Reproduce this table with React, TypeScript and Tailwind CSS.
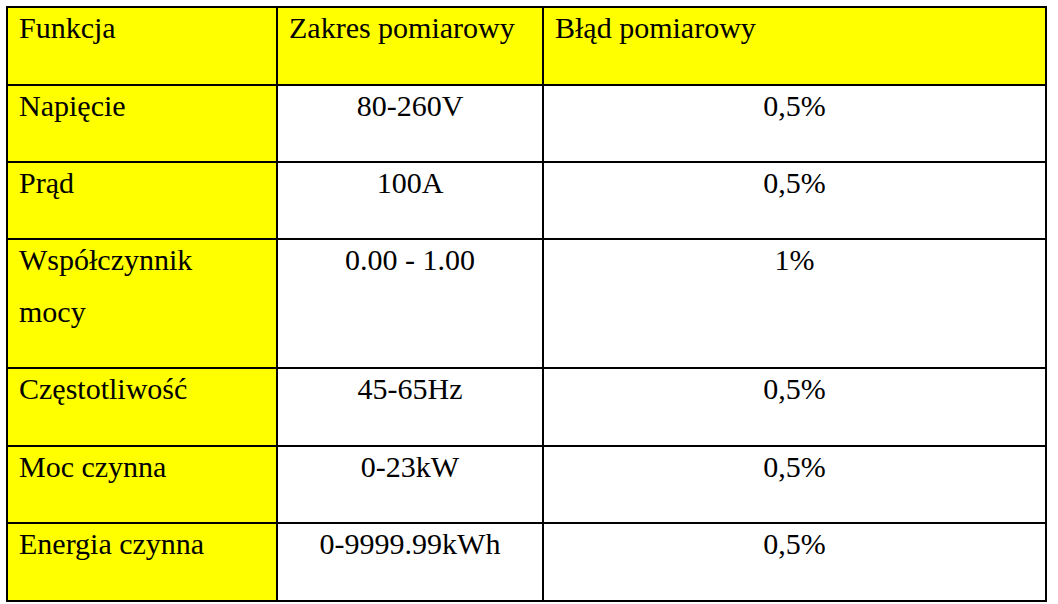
type Row = {
  name: string;
  range: string;
  error: string;
};

const rows: Row[] = [
  { name: "Napięcie", range: "80-260V", error: "0,5%" },
  { name: "Prąd", range: "100A", error: "0,5%" },
  { name: "Współczynnik mocy", range: "0.00 - 1.00", error: "1%" },
  { name: "Częstotliwość", range: "45-65Hz", error: "0,5%" },
  { name: "Moc czynna", range: "0-23kW", error: "0,5%" },
  { name: "Energia czynna", range: "0-9999.99kWh", error: "0,5%" },
];

// row heights include the bottom border of each cell
const heights = ["h-[77px]", "h-[77px]", "h-[129px]", "h-[78px]", "h-[77px]", "h-[78px]"];

function Cell({
  children,
  className,
}: {
  children: React.ReactNode;
  className: string;
}) {
  return (
    <div className={`border-r-2 border-b-2 border-black ${className}`}>
      <div className="-mt-[6px] leading-[52px]">{children}</div>
    </div>
  );
}

export default function App() {
  return (
    <div className="min-h-screen bg-white pl-[6px] pt-[6px] text-[30px] text-black">
      <div className="grid w-[1041px] grid-cols-[270px_266px_503px] border-l-2 border-t-2 border-black [font-family:Liberation_Serif]">
        <Cell className="h-[78px] bg-[#ffff00] pl-[11px] pr-[20px]">Funkcja</Cell>
        <Cell className="h-[78px] bg-[#ffff00] pl-[11px]">Zakres pomiarowy</Cell>
        <Cell className="h-[78px] bg-[#ffff00] pl-[11px]">Błąd pomiarowy</Cell>

        {rows.map((row, i) => (
          <div key={row.name} className="contents">
            <Cell className={`${heights[i]} bg-[#ffff00] pl-[11px] pr-[20px]`}>
              {row.name}
            </Cell>
            <Cell className={`${heights[i]} bg-white text-center`}>{row.range}</Cell>
            <Cell className={`${heights[i]} bg-white text-center`}>{row.error}</Cell>
          </div>
        ))}
      </div>
    </div>
  );
}
